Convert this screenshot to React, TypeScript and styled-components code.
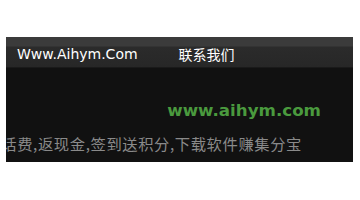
import React from "react";
import styled, { createGlobalStyle } from "styled-components";

const GlobalStyle = createGlobalStyle`
  body {
    margin: 0;
    background: #ffffff;
    font-family: "DejaVu Sans", "Noto Sans CJK SC", sans-serif;
  }
`;

const Page = styled.div`
  padding: 37px 7px 0 6px;
`;

const Box = styled.div`
  width: 347px;
  height: 125px;
  background: #111111;
  overflow: hidden;
  display: flex;
  flex-direction: column;
`;

const NavBar = styled.div`
  height: 30px;
  display: flex;
  align-items: center;
  padding: 0 0 0 11px;
  gap: 41px;
  background: linear-gradient(#3b3b3b 0, #3b3b3b 9px, #2b2b2b 10px, #272727 100%);
  border-bottom: 1px solid #1a1a1a;
`;

const NavLink = styled.a<{ $cjk?: boolean }>`
  color: #ffffff;
  text-decoration: none;
  font-size: 14px;
  padding-top: 4px;
  font-family: ${(p) =>
    p.$cjk ? '"Noto Sans CJK SC", sans-serif' : '"DejaVu Sans", sans-serif'};
`;

const Body = styled.div`
  flex: 1;
  display: flex;
  flex-direction: column;
  padding: 32px 32px 0 0;
`;

const Site = styled.div`
  align-self: flex-end;
  color: #4a9a3e;
  font-weight: bold;
  font-size: 16.7px;
  line-height: 20px;
`;

const Ticker = styled.div`
  margin-top: 14px;
  margin-right: 19px;
  display: flex;
  justify-content: flex-end;
  white-space: nowrap;
  color: #8a8a8a;
  font-size: 15.3px;
  letter-spacing: 0.6px;
  line-height: 18px;
  font-family: "Noto Sans CJK SC", sans-serif;
`;

export default function App() {
  return (
    <>
      <GlobalStyle />
      <Page>
        <Box>
          <NavBar>
            <NavLink href="#">Www.Aihym.Com</NavLink>
            <NavLink href="#" $cjk>联系我们</NavLink>
          </NavBar>
          <Body>
            <Site>www.aihym.com</Site>
            <Ticker>
              <span>话费,返现金,签到送积分,下载软件赚集分宝</span>
            </Ticker>
          </Body>
        </Box>
      </Page>
    </>
  );
}
